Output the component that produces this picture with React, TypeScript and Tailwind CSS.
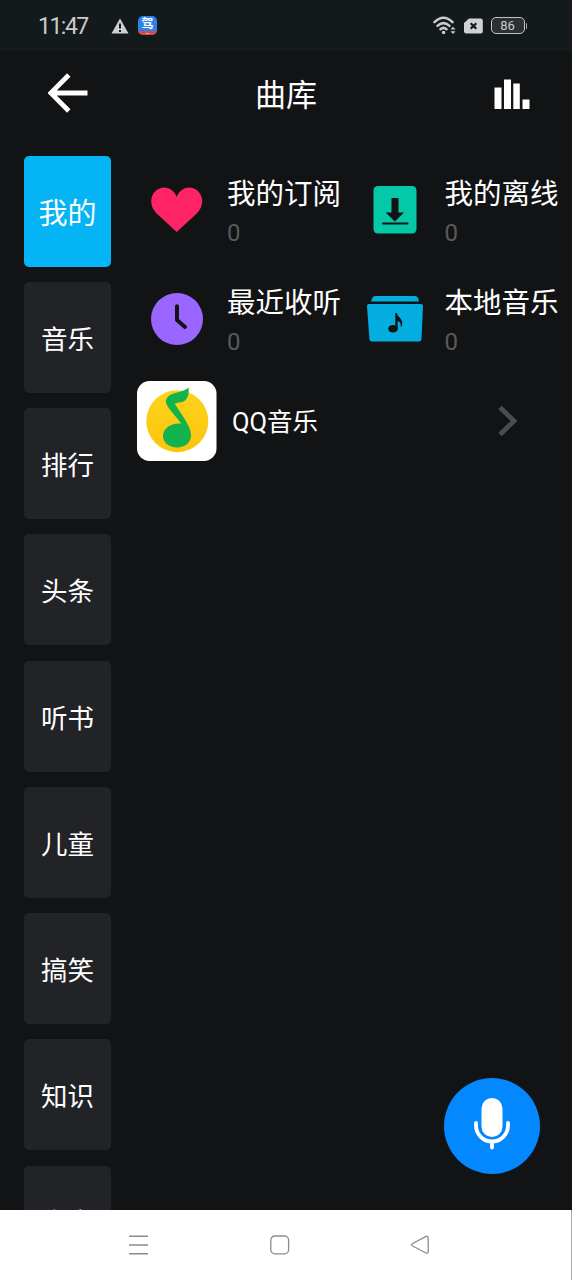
const cjk = "font-['Roboto','Noto_Sans_CJK_SC',sans-serif]";

const categories = ["我的", "音乐", "排行", "头条", "听书", "儿童", "搞笑", "知识", "人文"];

function HeartIcon() {
  return (
    <svg width="52" height="46" viewBox="0 0 52 46">
      <path
        fill="#ff2465"
        d="M25.7 45 5.400 26.200C-1.200 19.800-1.200 10.500 3.600 5 9.400-1.700 20.800-1.500 25.700 9.700 30.600-1.500 42-1.700 47.800 5c4.800 5.500 4.800 14.800-1.800 21.200z"
      />
    </svg>
  );
}

function DownloadIcon() {
  return (
    <svg width="44" height="48" viewBox="0 0 44 48">
      <rect x="0.500" width="43" height="47.500" rx="4.500" fill="#04c8a8" />
      <path d="M18.500 12h7v14.500H31L21.900 35.500l-9.300-9H18.500z" fill="#121315" />
      <path d="M10 37.600h24.500" stroke="#121315" strokeWidth="2" strokeLinecap="round" />
    </svg>
  );
}

function ClockIcon() {
  return (
    <svg width="52" height="52" viewBox="0 0 52 52">
      <circle cx="26" cy="26" r="26" fill="#9966ff" />
      <path
        d="M26 13.200V27l8 7"
        fill="none"
        stroke="#121315"
        strokeWidth="4"
        strokeLinecap="round"
        strokeLinejoin="round"
      />
    </svg>
  );
}

function FolderIcon() {
  return (
    <svg width="58" height="48" viewBox="0 0 58 48">
      <path fill="#04ade0" d="M5 6.500 6 3.500Q7 1 9 1H49Q51.500 1 52.300 3.500L53 6.500z" />
      <path fill="#04ade0" d="M3 9H55Q57 9 57 11L55.500 44Q55.300 46.500 53 46.500H6Q3.700 46.500 3.400 44L1 11Q1 9 3 9z" />
      <ellipse cx="27" cy="33.700" rx="4.800" ry="3.800" fill="#121315" />
      <path
        fill="#121315"
        d="M29.300 18h1.700c.3 4 6 5.500 5.200 11.500-.2 1-.8 2-1.500 2.600.6-3.300-.7-5.300-3-6V34h-2.400z"
      />
    </svg>
  );
}

function QQMusicLogo() {
  return (
    <svg width="80" height="80" viewBox="0 0 80 80">
      <defs>
        <linearGradient id="disc" x1="0" y1="0" x2="0" y2="1">
          <stop offset="0" stopColor="#fcd41c" />
          <stop offset="1" stopColor="#fdc30c" />
        </linearGradient>
      </defs>
      <rect width="79.500" height="80" rx="12.500" fill="#fff" />
      <circle cx="40.300" cy="40.200" r="31" fill="url(#disc)" />
      <path
        fill="#12b24c"
        d="M51.500 6.300c.8 6-.5 12-5 14.200-3 1.400-6.500.8-8.800 2.200L48 38.500c2.500 5 6 9.500 6 16 0 7-6 12-14 12s-14-5-14-11.500c0-8 8.500-13.500 18.300-12.500L32 27.500c-1.500-2.600-3.500-5-3.200-7.500C31.500 9.500 46.500 13 51.500 6.300z"
      />
    </svg>
  );
}

const entries = [
  { title: "我的订阅", count: 0, icon: <HeartIcon /> },
  { title: "我的离线", count: 0, icon: <DownloadIcon /> },
  { title: "最近收听", count: 0, icon: <ClockIcon /> },
  { title: "本地音乐", count: 0, icon: <FolderIcon /> },
];

function StatusBar() {
  return (
    <div className="flex h-[51px] shrink-0 items-center bg-[#141a1c] pr-[45px] pl-[38px] text-[#c9cccc]">
      <span className="w-[73px] pt-px text-[23px] leading-none tracking-[-1.5px]">11:47</span>
      <svg width="18" height="16" viewBox="0 0 18 16">
        <path d="M9 0.500 17.500 15.500H0.500z" fill="#cfcfcf" />
        <path d="M9 5.500v5M9 12v2" stroke="#141a1c" strokeWidth="2" />
      </svg>
      <div className="ml-[9px] flex h-[19px] w-[19px] flex-col items-center overflow-hidden rounded-[5px] bg-[#2b82ea]">
        <span className="h-[14.5px] text-[12px] leading-[17px] font-bold text-white">驾</span>
        <span className="h-[5px] w-full bg-[#d84a45] text-center text-[4px] leading-[5px] text-white">
          •••
        </span>
      </div>
      <div className="ml-auto flex items-center gap-2">
        <svg width="23" height="19" viewBox="0 0 23 19">
          <g fill="none" stroke="#c9cccc" strokeWidth="2.600" strokeLinecap="round">
            <path d="M1.500 6.200Q10.500-2.800 19.500 6.200" />
            <path d="M4.500 9.900Q10.500 4.300 16.500 9.900" />
            <path d="M7.500 13.200Q10.500 10.700 13.500 13.200" />
          </g>
          <circle cx="10.600" cy="16.500" r="1.700" fill="#c9cccc" />
          <path d="M17.500 13.500h5L20 10.800zM17.500 15.200h5L20 17.900z" fill="#c9cccc" />
        </svg>
        <svg width="19" height="16" viewBox="0 0 19 16">
          <path
            d="M5 0.500H16.500Q18.800 0.500 18.800 2.800V13.200Q18.800 15.500 16.500 15.500H2.300Q0 15.500 0 13.200V5z"
            fill="#cfd2d2"
          />
          <path d="M6.700 5.200l5.600 5.600M12.300 5.200l-5.600 5.600" stroke="#141a1c" strokeWidth="2.200" />
        </svg>
        <div className="flex items-center gap-px">
          <div className="flex h-[17px] w-[34px] items-center justify-center rounded-[5px] border-[1.5px] border-[#c0c3c3] bg-[#2c3032] text-[13px] leading-none">
            86
          </div>
          <div className="h-[6px] w-[1.5px] rounded-full bg-[#a0a3a3]" />
        </div>
      </div>
    </div>
  );
}

function Header() {
  return (
    <div className="flex h-[104px] shrink-0 items-start justify-between pr-[42px] pl-[48px] text-white">
      <svg className="mt-[22px]" width="40" height="40" viewBox="0 0 40 40">
        <path d="M20.800 2 2.800 20l18 18M3 20h36.500" fill="none" stroke="#fff" strokeWidth="4.800" />
      </svg>
      <h1 className="mt-[24px] mr-[10px] text-[31px] leading-[42px]">曲库</h1>
      <svg className="mt-[28px]" width="36" height="30" viewBox="0 0 36 30">
        <path
          d="M0.500 8.500h7V30h-7zM10 .5h7V30h-7zM19.300 4.500h6.500V30h-6.500zM28.500 20.500h7V30h-7z"
          fill="#fff"
        />
      </svg>
    </div>
  );
}

function NavBar() {
  return (
    <div className="flex h-[70px] shrink-0 items-center justify-between border-r border-[#aaa] bg-white pr-[141px] pl-[128px]">
      <svg width="21" height="20" viewBox="0 0 21 20">
        <path d="M1 1.200h19M1 10h19M1 18.700h19" stroke="#8c8c8c" strokeWidth="1.500" />
      </svg>
      <svg width="20" height="20" viewBox="0 0 20 20">
        <rect x="0.800" y="1" width="17.800" height="17.800" rx="4" fill="none" stroke="#8c8c8c" strokeWidth="1.300" />
      </svg>
      <svg width="20" height="20" viewBox="0 0 20 20">
        <path
          d="M2.200 8.800 16 1.400Q18.200.7 18.200 3V16.500Q18.200 18.800 16 18L2.200 10.700Q.7 9.700 2.200 8.800z"
          fill="none"
          stroke="#8c8c8c"
          strokeWidth="1.300"
        />
      </svg>
    </div>
  );
}

export default function App() {
  return (
    <div className={`relative flex h-[1280px] w-[572px] flex-col overflow-hidden bg-[#121315] ${cjk}`}>
      <StatusBar />
      <Header />
      <div className="flex min-h-0 flex-1 overflow-hidden pl-6">
        <div className="flex w-[87px] shrink-0 flex-col gap-[15.25px] pt-[0.5px]">
          {categories.map((name, i) => (
            <div
              key={name}
              className={
                i === 0
                  ? "flex h-[111px] shrink-0 items-center justify-center rounded-[5px] bg-[#04b4f4] pt-[7px] text-[29px] text-white"
                  : "flex h-[111px] shrink-0 items-center justify-center rounded-[5px] bg-[#222327] pt-[5px] text-[26.5px] text-white last:pt-[3px]"
              }
            >
              {name}
            </div>
          ))}
        </div>
        <div className="ml-[25.5px] flex-1">
          <div className="grid grid-cols-[217.5px_217.5px]">
            {entries.map((e) => (
              <div key={e.title} className="flex h-[109px] items-center">
                <div className="flex w-[83px] shrink-0 justify-center pr-[2px]">{e.icon}</div>
                <div className="ml-[7.5px] pt-[7px] whitespace-nowrap">
                  <div className="text-[28.5px] leading-[40px] text-white">{e.title}</div>
                  <div className="text-[24px] leading-[37px] text-[#595a5c]">{e.count}</div>
                </div>
              </div>
            ))}
          </div>
          <div className="mt-[7.5px] flex items-center pr-[54px]">
            <QQMusicLogo />
            <span className="ml-[15.5px] pt-[4px] text-[25.5px] text-white">QQ音乐</span>
            <svg className="ml-auto" width="20" height="32" viewBox="0 0 20 32">
              <path d="M2 2.500 16 16 2 29.500" fill="none" stroke="#4b4c50" strokeWidth="4.800" />
            </svg>
          </div>
        </div>
      </div>
      <NavBar />
      <button className="absolute right-[32px] bottom-[106px] flex h-[96px] w-[96px] items-center justify-center rounded-full bg-[#0488ff]">
        <svg className="mb-[4px]" width="36" height="54" viewBox="0 0 36 54">
          <rect x="7.500" y="1" width="21" height="39" rx="10.500" fill="#fff" />
          <path
            d="M2 26v2.500a16 16 0 0 0 32 0V26M18 45v5.500"
            fill="none"
            stroke="#fff"
            strokeWidth="3.800"
            strokeLinecap="round"
          />
        </svg>
      </button>
    </div>
  );
}
